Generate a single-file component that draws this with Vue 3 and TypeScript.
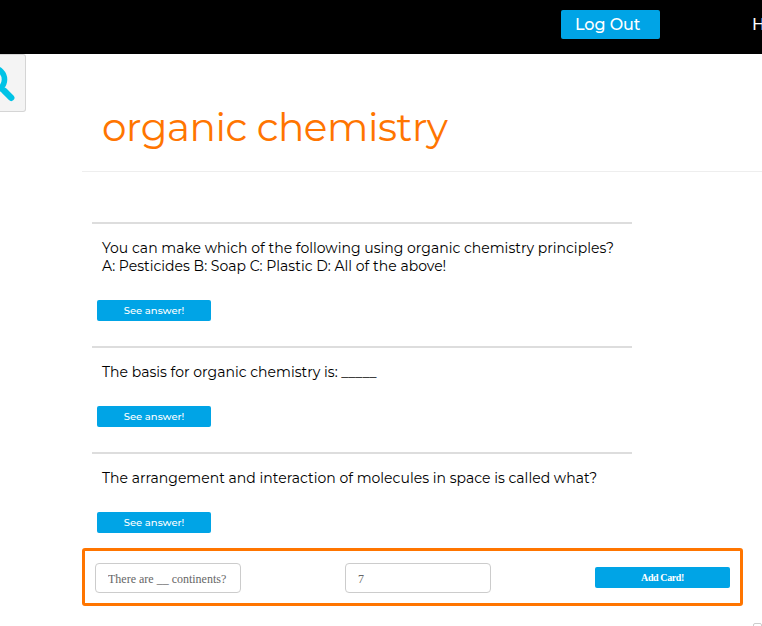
<script setup lang="ts">
import { ref } from 'vue'

interface Card {
  id: number
  lines: string[]
}

const title = 'organic chemistry'
const cards: Card[] = [
  {
    id: 1,
    lines: [
      'You can make which of the following using organic chemistry principles?',
      'A: Pesticides B: Soap C: Plastic D: All of the above!',
    ],
  },
  { id: 2, lines: ['The basis for organic chemistry is: _____'] },
  { id: 3, lines: ['The arrangement and interaction of molecules in space is called what?'] },
]
const question = ref('')
const answer = ref('')
</script>

<template>
  <div class="page">
    <header class="topbar">
      <button class="logout">Log Out</button>
      <a class="nav-link">H</a>
    </header>
    <div class="body">
      <aside class="side">
        <div class="search">
          <svg width="25" height="56" viewBox="0 0 25 56">
            <circle cx="-7" cy="24.5" r="11.5" fill="none" stroke="#00c3e6" stroke-width="5.6" />
            <path d="M0 32.5 L4 36" fill="none" stroke="#00c3e6" stroke-width="4" />
            <path d="M4.2 35.8 L11.2 42.8" fill="none" stroke="#00c3e6" stroke-width="6.4" stroke-linecap="round" />
          </svg>
        </div>
      </aside>
      <main class="content">
        <h1 class="title">{{ title }}</h1>
        <section class="deck">
          <article v-for="card in cards" :key="card.id" class="card">
            <p class="question">
              <span v-for="line in card.lines" :key="line" class="line">{{ line }}</span>
            </p>
            <button class="btn see">See answer!</button>
          </article>
        </section>
        <form class="add" @submit.prevent>
          <input v-model="question" class="field" placeholder="There are __ continents?" />
          <input v-model="answer" class="field" placeholder="7" />
          <button class="btn submit">Add Card!</button>
        </form>
        <div class="next-row"><div class="next-box"></div></div>
      </main>
    </div>
  </div>
</template>

<style>
body {
  margin: 0;
  background: #fff;
  overflow: hidden;
}
</style>

<style scoped>
.page {
  width: 762px;
  height: 626px;
  overflow: hidden;
  font-family: Montserrat, Inter, sans-serif;
  color: #000;
}
button {
  border: 0;
  margin: 0;
  font-family: inherit;
  color: #fff;
  background: #00a4e6;
  border-radius: 2px;
}
.topbar {
  display: flex;
  align-items: flex-start;
  height: 54px;
  padding-left: 561px;
  background: #000;
  box-sizing: border-box;
}
.logout {
  flex: none;
  width: 99px;
  height: 29px;
  margin-top: 10px;
  padding: 0 0 0 14px;
  text-align: left;
  font-size: 16px;
  font-weight: 500;
  letter-spacing: -0.05px;
}
.nav-link {
  margin: 10px 0 0 92px;
  line-height: 29px;
  font-size: 16px;
  font-weight: 500;
  color: #fff;
}
.body {
  display: flex;
}
.side {
  flex: none;
  width: 82px;
}
.search {
  width: 25px;
  height: 56px;
  border: 1px solid #d5d5d5;
  border-left: 0;
  border-radius: 0 3px 3px 0;
  background: #f4f4f4;
}
.search svg {
  display: block;
}
.content {
  flex: none;
  width: 680px;
}
.title {
  margin: 0;
  height: 118px;
  padding: 48px 0 0 20px;
  box-sizing: border-box;
  border-bottom: 1px solid #eee;
  font-size: 39px;
  font-weight: 400;
  line-height: 50px;
  color: #ff7500;
  letter-spacing: -0.45px;
  white-space: nowrap;
}
.deck {
  margin: 50px 0 0 10px;
  width: 540px;
}
.card {
  border-top: 2px solid #ddd;
  padding: 15px 0 25px 5px;
}
.card:last-child {
  padding-bottom: 15px;
}
.question {
  margin: 0 0 25px 5px;
  font-size: 14px;
  line-height: 18px;
  letter-spacing: 0.015px;
}
.line {
  display: block;
  white-space: nowrap;
}
.btn {
  display: block;
  height: 21px;
  padding: 0;
  font-size: 10px;
  line-height: 21px;
}
.see {
  width: 114px;
  font-weight: 500;
}
.add {
  display: flex;
  align-items: center;
  width: 661px;
  height: 58px;
  padding: 0 10px;
  box-sizing: border-box;
  border: 3px solid #ff7500;
  border-radius: 3px;
}
.field {
  width: 146px;
  height: 30px;
  margin: 2px 104px 0 0;
  padding: 2px 12px 0;
  box-sizing: border-box;
  border: 1px solid #ccc;
  border-radius: 4px;
  font: 12px 'Liberation Serif', serif;
  color: #555;
  background: #fff;
}
.field::placeholder {
  color: #666;
  opacity: 1;
}
.submit {
  width: 135px;
  font-family: 'Liberation Serif', serif;
  font-weight: 700;
  letter-spacing: -0.4px;
}
.next-row {
  display: flex;
  padding: 17px 0 0 671px;
}
.next-box {
  width: 30px;
  height: 30px;
  border: 1px solid #ccc;
  border-radius: 2px;
}
</style>
